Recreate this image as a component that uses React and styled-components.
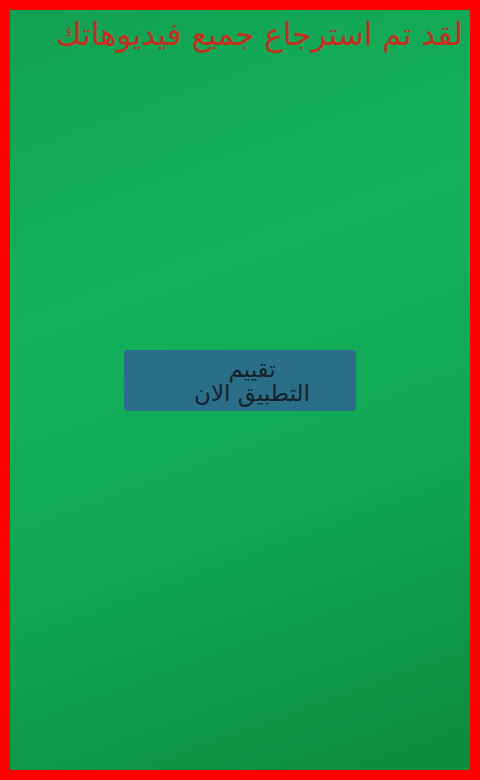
import React from "react";
import styled, { createGlobalStyle } from "styled-components";

const Global = createGlobalStyle`
  html, body { margin: 0; padding: 0; width: 480px; height: 780px; overflow: hidden; }
  #root { width: 480px; height: 780px; }
`;

const Frame = styled.div`
  box-sizing: border-box;
  width: 480px;
  height: 780px;
  border: 10px solid #ff0000;
  background: linear-gradient(160deg, #11a152 0%, #13b15c 35%, #10a653 65%, #0b8b3b 100%);
  display: flex;
  flex-direction: column;
  font-family: "DejaVu Sans", "Noto Sans", sans-serif;
`;

const Title = styled.h1`
  margin: 0;
  padding: 4px 7px 0 0;
  direction: rtl;
  text-align: right;
  font-size: 31px;
  font-weight: normal;
  line-height: 40px;
  color: #c42f1f;
`;

const Center = styled.div`
  flex: 1;
  display: flex;
  align-items: center;
  justify-content: center;
  padding-bottom: 64px;
`;

const RateButton = styled.button`
  width: 232px;
  height: 61px;
  border: none;
  border-radius: 4px;
  background: #2b6e88;
  color: #15212d;
  font-family: "DejaVu Sans", "Noto Sans", sans-serif;
  font-size: 23px;
  line-height: 24px;
  direction: rtl;
  padding: 1px 0 0 24px;
  display: flex;
  flex-direction: column;
  align-items: center;
  justify-content: center;
`;

export default function App() {
  return (
    <>
      <Global />
      <Frame>
        <Title>لقد تم استرجاع جميع فيديوهاتك</Title>
        <Center>
          <RateButton>
            <span>تقييم</span>
            <span>التطبيق الان</span>
          </RateButton>
        </Center>
      </Frame>
    </>
  );
}
